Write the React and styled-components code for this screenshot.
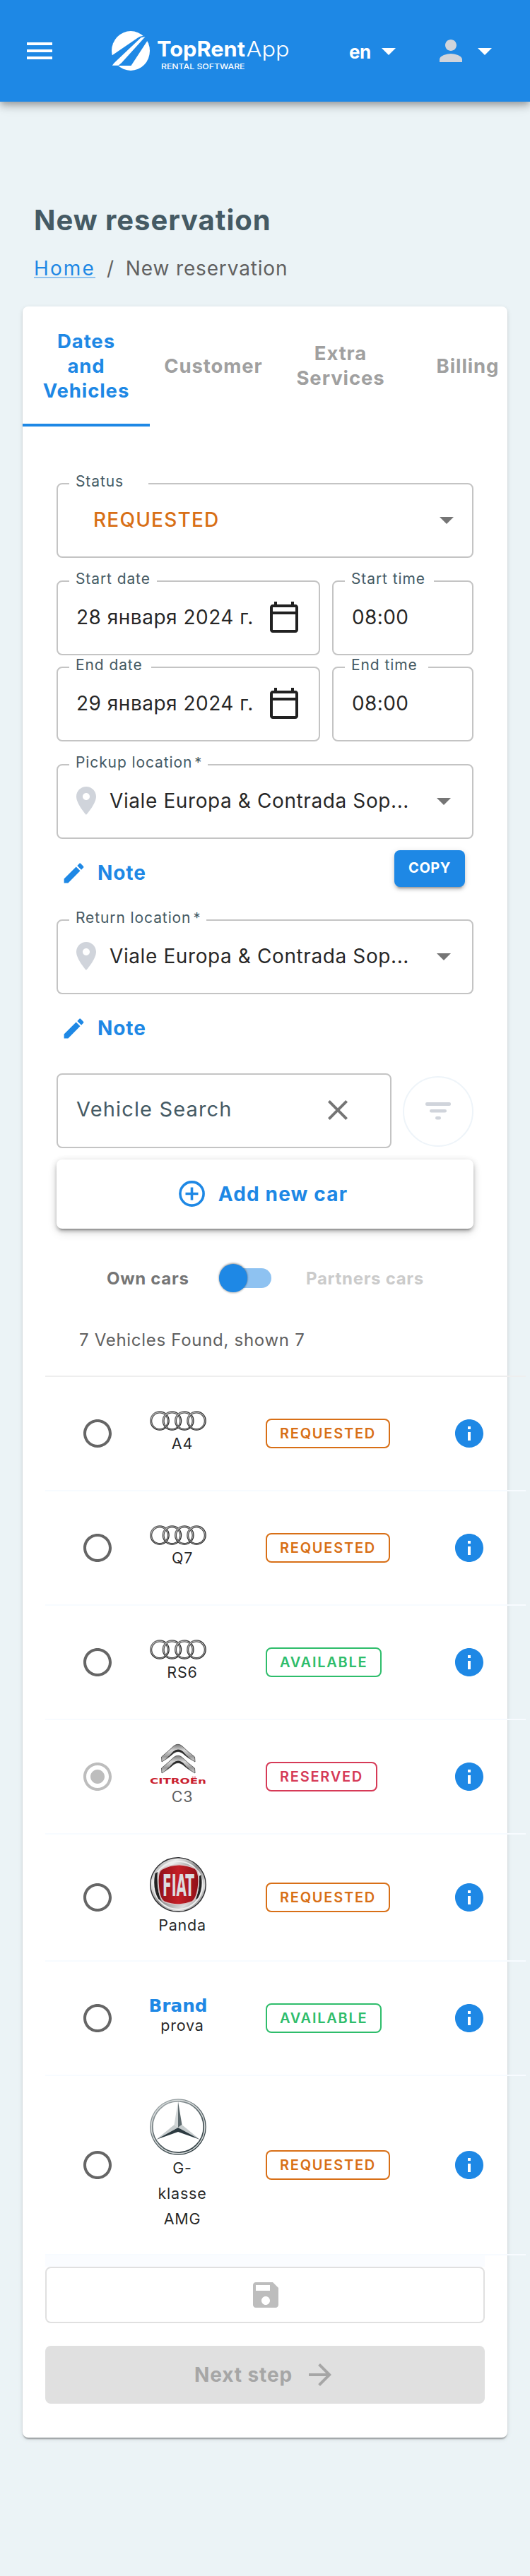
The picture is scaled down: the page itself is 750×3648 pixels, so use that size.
import React from "react";
import styled, { createGlobalStyle } from "styled-components";

const color = {
  primary: "#1e88e5",
  page: "#ebf3f6",
  heading: "#455a64",
  text: "rgba(0, 0, 0, 0.87)",
  muted: "#616161",
  outline: "#c4c4c4",
  icon: "#757575",
  pale: "#d0d4db",
  requested: "#d86f16",
  available: "#2ebd6b",
  reserved: "#d63a57",
};

const GlobalStyle = createGlobalStyle`
  *, *::before, *::after { box-sizing: border-box; }
  body {
    margin: 0;
    background: ${color.page};
    color: ${color.text};
    font-family: Inter, "Noto Sans", sans-serif;
    font-size: 28px;
  }
  svg { display: block; flex: none; overflow: visible; }
`;

/* ---------- icons ---------- */

const MaterialIcon = ({ d, size = 48, fill = "currentColor" }) => (
  <svg width={size} height={size} viewBox="0 0 24 24" fill={fill}>
    <path d={d} />
  </svg>
);

const paths = {
  menu: "M3 18h18v-2H3v2zm0-5h18v-2H3v2zm0-7v2h18V6H3z",
  caret: "M7 10l5 5 5-5z",
  person: "M12 12c2.21 0 4-1.79 4-4s-1.79-4-4-4-4 1.79-4 4 1.79 4 4 4zm0 2c-2.67 0-8 1.34-8 4v2h16v-2c0-2.66-5.33-4-8-4z",
  calendar: "M20 3h-1V1h-2v2H7V1H5v2H4c-1.1 0-2 .9-2 2v16c0 1.1.9 2 2 2h16c1.1 0 2-.9 2-2V5c0-1.1-.9-2-2-2zm0 18H4V10h16v11zm0-13H4V5h16v3z",
  pin: "M12 2C8.13 2 5 5.13 5 9c0 5.25 7 13 7 13s7-7.75 7-13c0-3.87-3.13-7-7-7zm0 9.5c-1.38 0-2.5-1.12-2.5-2.5s1.12-2.5 2.5-2.5 2.5 1.12 2.5 2.5-1.12 2.5-2.5 2.5z",
  edit: "M3 17.25V21h3.75L17.81 9.94l-3.75-3.75L3 17.25zM20.71 7.04c.39-.39.39-1.02 0-1.41l-2.34-2.34c-.39-.39-1.02-.39-1.41 0l-1.83 1.83 3.75 3.75 1.83-1.83z",
  close: "M19 6.41L17.59 5 12 10.59 6.41 5 5 6.41 10.59 12 5 17.59 6.41 19 12 13.41 17.59 19 19 17.59 13.41 12z",
  info: "M12 2C6.48 2 2 6.48 2 12s4.48 10 10 10 10-4.48 10-10S17.52 2 12 2zm1 15h-2v-6h2v6zm0-8h-2V7h2v2z",
  radioOff: "M12 2C6.48 2 2 6.48 2 12s4.48 10 10 10 10-4.48 10-10S17.52 2 12 2zm0 18c-4.42 0-8-3.58-8-8s3.58-8 8-8 8 3.58 8 8-3.58 8-8 8z",
  radioOn: "M12 7c-2.76 0-5 2.24-5 5s2.24 5 5 5 5-2.24 5-5-2.24-5-5-5zm0-5C6.48 2 2 6.48 2 12s4.48 10 10 10 10-4.48 10-10S17.52 2 12 2zm0 18c-4.42 0-8-3.58-8-8s3.58-8 8-8 8 3.58 8 8-3.58 8-8 8z",
  save: "M17 3H5c-1.11 0-2 .9-2 2v14c0 1.1.89 2 2 2h14c1.1 0 2-.9 2-2V7l-4-4zm-5 16c-1.66 0-3-1.34-3-3s1.34-3 3-3 3 1.34 3 3-1.34 3-3 3zm3-10H5V5h10v4z",
  arrow: "M12 4l-1.41 1.41L16.17 11H4v2h12.17l-5.58 5.59L12 20l8-8z",
};

const FilterIcon = () => (
  <svg width="36" height="26" viewBox="0 0 36 26" fill={color.pale}>
    <rect x="0" y="0" width="36" height="5" rx="2.2" />
    <rect x="6" y="10" width="24" height="4.4" rx="2.2" />
    <rect x="14" y="20" width="8" height="4.4" rx="2.2" />
  </svg>
);

const PlusCircleIcon = () => (
  <svg width="37" height="37" viewBox="0 0 37 37" fill="none" stroke={color.primary} strokeWidth="3.6">
    <circle cx="18.5" cy="18.5" r="16.6" />
    <path d="M18.5 9.5v18M9.5 18.5h18" />
  </svg>
);

/* ---------- brand logos ---------- */

const AppLogo = () => (
  <svg width="252" height="56" viewBox="0 0 252 56" fill="#fff">
    <ellipse cx="27" cy="28" rx="27" ry="28" />
    <path d="M-1 35.5 37 9.5q2.500-2.500 7-2.500h5.500l1.500 6L27.500 49H-1z" fill={color.primary} />
    <path d="M41.500 9.200 47.500 8 14 45l-4.500 3.800H.8q1.500-2.500 4.200-5z" />
    <g fontFamily="Inter, sans-serif">
      <text x="64" y="36.300" fontSize="29.500" fontWeight="700" textLength="125" lengthAdjust="spacingAndGlyphs">TopRent</text>
      <text x="190.500" y="36.300" fontSize="29.500" fontWeight="300" textLength="61" lengthAdjust="spacingAndGlyphs">App</text>
      <text x="70" y="53.700" fontSize="11" fontWeight="500" textLength="118.500" lengthAdjust="spacingAndGlyphs">RENTAL SOFTWARE</text>
    </g>
  </svg>
);

const AudiLogo = () => (
  <svg width="80" height="28" viewBox="0 0 80 28" fill="none">
    <defs>
      <linearGradient id="audiRing" x1="0" y1="0" x2="1" y2="1">
        <stop offset="0" stopColor="#888" />
        <stop offset="0.4" stopColor="#333" />
        <stop offset="1" stopColor="#222" />
      </linearGradient>
    </defs>
    {[14, 31.4, 48.8, 66].map((cx) => (
      <g key={cx}>
        <circle cx={cx} cy="14" r="12.300" stroke="#c4c4c4" strokeWidth="2.400" />
        <circle cx={cx} cy="14" r="13.200" stroke="url(#audiRing)" strokeWidth="1.200" />
        <circle cx={cx} cy="14.300" r="11.300" stroke="#4a4a4a" strokeWidth="1.100" />
      </g>
    ))}
  </svg>
);

const CitroenLogo = () => (
  <svg width="80" height="56" viewBox="0 0 80 56">
    <defs>
      <linearGradient id="chevron" x1="0" y1="0" x2="0" y2="1">
        <stop offset="0" stopColor="#777" />
        <stop offset="0.35" stopColor="#d8d8d8" />
        <stop offset="0.7" stopColor="#999" />
        <stop offset="1" stopColor="#ddd" />
      </linearGradient>
    </defs>
    {[0, 16].map((y) => (
      <g key={y} transform={`translate(0 ${y})`}>
        <path
          d="M16.500 18Q25 11 34 2.500 40-2 45.500 2.500 54 11 63.500 18L64 25Q54 20 46 12.500 40 8.500 34 12.500 26 20 17 25z"
          fill="url(#chevron)"
          stroke="#555"
          strokeWidth="0.900"
        />
        <path d="M22 21Q28 17 33 10.500 40 4.500 47 10.500 52 17 58 21 51 17.500 46 12.500 40 8.500 34 12.500 29 17.500 22 21z" fill="#2b2b2b" />
      </g>
    ))}
    <text x="0" y="55.700" fontFamily="DejaVu Sans, sans-serif" fontSize="10" fontWeight="700" fill="#c9202f" textLength="80" lengthAdjust="spacingAndGlyphs">
      CITROËn
    </text>
  </svg>
);

const FiatLogo = () => (
  <svg width="80" height="78" viewBox="0 0 80 78">
    <defs>
      <linearGradient id="fiatChrome" x1="0" y1="0" x2="1" y2="1">
        <stop offset="0" stopColor="#777" />
        <stop offset="0.25" stopColor="#eee" />
        <stop offset="0.5" stopColor="#888" />
        <stop offset="0.75" stopColor="#ddd" />
        <stop offset="1" stopColor="#444" />
      </linearGradient>
      <linearGradient id="fiatRed" x1="0" y1="0" x2="1" y2="0">
        <stop offset="0" stopColor="#8f1018" />
        <stop offset="0.5" stopColor="#c41f27" />
        <stop offset="1" stopColor="#8f1018" />
      </linearGradient>
    </defs>
    <ellipse cx="40" cy="39" rx="39.200" ry="38.200" fill="url(#fiatChrome)" stroke="#2d2d30" strokeWidth="1.400" />
    <ellipse cx="40" cy="40" rx="34.500" ry="34" fill="none" stroke="#efefef" strokeWidth="2" />
    <path d="M7.500 23Q3.500 44 12 59L16 62Q9 43 11 21zM72.500 25Q76 44 68 58L65 60Q71 43 70 27z" fill="#222" />
    <path
      d="M17 17Q40 5 64 16 70 20 69 38 67 58 60 63 40 71 20 63 13 58 12 38 11 20 17 17z"
      fill="url(#fiatRed)"
      stroke="#d9c5c7"
      strokeWidth="1.600"
    />
    <text x="18" y="54.500" fontFamily="DejaVu Sans Condensed, DejaVu Sans, sans-serif" fontSize="43" fontWeight="700" fill="#dcdde0" textLength="45" lengthAdjust="spacingAndGlyphs">
      FIAT
    </text>
  </svg>
);

const MercedesLogo = () => (
  <svg width="80" height="80" viewBox="0 0 80 80">
    <defs>
      <linearGradient id="mbRing" x1="0.2" y1="0" x2="0.8" y2="1">
        <stop offset="0" stopColor="#a2aaac" />
        <stop offset="0.5" stopColor="#566266" />
        <stop offset="1" stopColor="#2c3a3e" />
      </linearGradient>
    </defs>
    <circle cx="40" cy="40" r="37.600" fill="none" stroke="url(#mbRing)" strokeWidth="4.400" />
    <circle cx="40" cy="40" r="37.800" fill="none" stroke="#d9dddd" strokeWidth="1.500" />
    <path d="M40 4 34.500 37 40 41z" fill="#d0d5d6" />
    <path d="M40 4 45.500 37 40 41z" fill="#5e6a6e" />
    <path d="M45.500 37 71 58 40 41z" fill="#c6cccd" />
    <path d="M34.500 37 9 58 40 41z" fill="#c6cccd" />
    <path d="M40 41 71 58 40 47 9 58z" fill="#2c3a40" />
  </svg>
);

const BrandPlaceholder = () => (
  <svg width="82" height="20" viewBox="0 0 82 20">
    <text x="-1.500" y="19" fontFamily="DejaVu Sans, sans-serif" fontSize="24.500" fontWeight="700" fill={color.primary} textLength="83" lengthAdjust="spacingAndGlyphs">
      Brand
    </text>
  </svg>
);

/* ---------- header ---------- */

const Header = styled.header`
  position: relative;
  display: flex;
  align-items: center;
  height: 144px;
  padding: 0 40px 0 32px;
  background: ${color.primary};
  color: #fff;
  box-shadow: 0 4px 8px -2px rgba(0, 0, 0, 0.2), 0 8px 10px rgba(0, 0, 0, 0.14), 0 2px 20px rgba(0, 0, 0, 0.12);
`;

const LogoLink = styled.div`
  margin-left: 78px;
`;

const LanguageMenu = styled.div`
  display: flex;
  align-items: center;
  margin-left: 84px;
  font-size: 26px;
  font-weight: 700;
  letter-spacing: -0.5px;
  span { width: 32px; padding-top: 3px; }
`;

const AccountMenu = styled.div`
  display: flex;
  align-items: center;
  margin-left: auto;
  svg:first-child { color: ${color.pale}; }
`;

/* ---------- page heading ---------- */

const Heading = styled.div`
  padding: 144px 48px 37px;
`;

const Title = styled.h1`
  margin: 0;
  color: ${color.heading};
  font-size: 40px;
  font-weight: 700;
  line-height: 48px;
  letter-spacing: 0.95px;
`;

const Breadcrumbs = styled.nav`
  display: flex;
  margin-top: 27px;
  color: ${color.muted};
  line-height: 34px;
  letter-spacing: 0.85px;
  a {
    height: 31px;
    color: ${color.primary};
    border-bottom: 2px solid rgba(30, 136, 229, 0.45);
    letter-spacing: 2.1px;
  }
  i {
    width: 43px;
    text-align: center;
    font-style: normal;
  }
`;

/* ---------- card and tabs ---------- */

const Card = styled.section`
  width: 686px;
  margin: 0 0 196px 32px;
  padding-bottom: 48px;
  border-radius: 8px;
  background: #fff;
  box-shadow: 0 4px 2px -2px rgba(0, 0, 0, 0.2), 0 2px 2px rgba(0, 0, 0, 0.14), 0 2px 6px rgba(0, 0, 0, 0.12);
`;

const Tabs = styled.div`
  display: flex;
  height: 170px;
  overflow: hidden;
`;

const Tab = styled.div`
  display: flex;
  flex: 0 0 180px;
  align-items: center;
  justify-content: center;
  padding: 2px ${(p) => (p.$narrow ? 26 : 12)}px 0;
  border-bottom: 4px solid ${(p) => (p.$active ? color.primary : "transparent")};
  color: ${(p) => (p.$active ? color.primary : "#a0a0a0")};
  font-size: 27.5px;
  font-weight: 700;
  line-height: 35px;
  letter-spacing: 0.9px;
  text-align: center;
`;

/* ---------- form ---------- */

const Form = styled.div`
  padding: 80px 48px 0;
`;

const Field = styled.div`
  position: relative;
  display: flex;
  align-items: center;
  height: 106px;
  padding: 0 ${(p) => p.$right ?? 26}px 2px ${(p) => p.$left ?? 26}px;
  border: 2px solid ${color.outline};
  border-radius: 8px;
`;

const FieldLabel = styled.label`
  position: absolute;
  top: -14px;
  left: 16px;
  width: ${(p) => p.$notch}px;
  padding-left: 9px;
  background: #fff;
  color: ${color.heading};
  font-size: 21px;
  line-height: 20px;
  letter-spacing: 0.9px;
  white-space: nowrap;
  sup {
    margin-left: 3px;
    font-size: 20px;
    line-height: 0;
    vertical-align: baseline;
    letter-spacing: 0;
  }
`;

const Value = styled.span`
  flex: 1;
  letter-spacing: ${(p) => p.$spacing ?? 1}px;
  white-space: nowrap;
`;

const StatusValue = styled(Value)`
  color: ${color.requested};
  font-weight: 500;
`;

const CaretSlot = styled.span`
  color: ${color.icon};
`;

const DateRow = styled.div`
  display: grid;
  grid-template-columns: 373px 200px;
  gap: 17px;
  margin-top: ${(p) => p.$top}px;
`;

const LocationField = styled(Field)`
  margin-top: ${(p) => p.$top ?? 0}px;
`;

const PinSlot = styled.span`
  margin-right: 9px;
  color: ${color.pale};
`;

const NoteRow = styled.div`
  display: flex;
  justify-content: space-between;
  height: ${(p) => p.$height}px;
  padding: 16px 12px 0 6px;
`;

const NoteButton = styled.div`
  display: flex;
  align-items: center;
  gap: 15px;
  height: 64px;
  color: ${color.primary};
  font-weight: 700;
  letter-spacing: 0.9px;
`;

const CopyButton = styled.div`
  width: 100px;
  height: 52px;
  border-radius: 8px;
  background: ${color.primary};
  color: #fff;
  font-size: 20px;
  font-weight: 700;
  line-height: 50px;
  letter-spacing: 0.5px;
  text-align: center;
  box-shadow: 0 6px 2px -4px rgba(0, 0, 0, 0.2), 0 4px 4px rgba(0, 0, 0, 0.14), 0 2px 10px rgba(0, 0, 0, 0.12);
`;

const SearchRow = styled.div`
  display: grid;
  grid-template-columns: 474px 100px;
  justify-content: space-between;
  align-items: center;
`;

const SearchText = styled(Value)`
  padding-bottom: 4px;
  color: ${color.heading};
  font-size: 29px;
`;

const FilterButton = styled.div`
  display: grid;
  place-items: center;
  width: 100px;
  height: 100px;
  margin-top: 2px;
  border: 2px solid #eef4f9;
  border-radius: 50%;
`;

const AddCarButton = styled.div`
  display: flex;
  align-items: center;
  justify-content: center;
  gap: 19px;
  height: 98px;
  margin-top: 16px;
  padding: 0 5px 1px 0;
  border-radius: 8px;
  background: #fff;
  color: ${color.primary};
  font-weight: 700;
  letter-spacing: 1.15px;
  box-shadow: 0 6px 2px -4px rgba(0, 0, 0, 0.2), 0 4px 4px rgba(0, 0, 0, 0.14), 0 2px 10px rgba(0, 0, 0, 0.16), 0 6px 14px rgba(0, 0, 0, 0.1);
`;

const OwnershipRow = styled.div`
  display: flex;
  align-items: center;
  height: 140px;
  padding-left: 71px;
  font-size: 24px;
  font-weight: 700;
`;

const OwnershipLabel = styled.span`
  width: ${(p) => p.$width}px;
  color: ${(p) => (p.$active ? "#757575" : "#cbcbcb")};
  letter-spacing: 0.7px;
  white-space: nowrap;
`;

const Switch = styled.div`
  display: flex;
  align-items: center;
  width: 68px;
  height: 28px;
  margin: 0 49px 0 6px;
  border-radius: 14px;
  background: #8ec2f1;
  &::before {
    content: "";
    flex: none;
    width: 40px;
    height: 40px;
    margin-left: -6px;
    border-radius: 50%;
    background: ${color.primary};
    box-shadow: 0 2px 2px rgba(0, 0, 0, 0.14), 0 -1px 3px rgba(0, 0, 0, 0.45);
  }
`;

const ResultCount = styled.div`
  height: 68px;
  padding-left: 32px;
  color: ${color.muted};
  font-size: 24px;
  line-height: 35px;
  letter-spacing: 0.7px;
`;

/* ---------- vehicle table ---------- */

const VehicleList = styled.div`
  width: 680px;
  margin-left: 32px;
  border-top: 2px solid #eeeeee;
`;

const VehicleRow = styled.div`
  display: grid;
  grid-template-columns: 148px 92px 72px 264px 1fr;
  align-items: center;
  min-height: 162px;
  padding: 32px 0;
  border-bottom: 2px solid #f7fbff;
`;

const RadioCell = styled.div`
  grid-column: 1;
  padding-left: 50px;
  color: ${(p) => (p.$disabled ? "#bdbdbd" : "#666")};
`;

const ModelCell = styled.div`
  grid-column: 2;
  color: ${(p) => (p.$disabled ? "#616161" : color.text)};
`;

const ModelName = styled.div`
  width: 70px;
  margin-left: 11px;
  font-size: 21.5px;
  line-height: 36px;
  letter-spacing: 0.8px;
  text-align: center;
`;

const StatusCell = styled.div`
  grid-column: 4;
`;

const InfoCell = styled.div`
  grid-column: 5;
  color: ${color.primary};
`;

const StatusChip = styled.div`
  display: block;
  width: ${(p) => p.$width}px;
  height: 42px;
  padding-left: 18px;
  border: 2px solid ${(p) => color[p.$status]};
  border-radius: 8px;
  color: ${(p) => color[p.$status]};
  font-size: 20px;
  font-weight: 600;
  line-height: 38px;
  letter-spacing: 1.75px;
  text-transform: uppercase;
`;

/* ---------- footer actions ---------- */

const Actions = styled.div`
  display: grid;
  gap: 32px;
  margin: 0 32px;
  padding-top: 16px;
  background: linear-gradient(#fafcff 16px, transparent 16px);
`;

const SaveButton = styled.div`
  display: grid;
  place-items: center;
  height: 80px;
  padding-left: 2px;
  border: 2px solid #e0e0e0;
  border-radius: 8px;
  background: #fff;
  color: #bdbdbd;
`;

const NextButton = styled.div`
  display: flex;
  align-items: center;
  justify-content: center;
  gap: 15px;
  height: 82px;
  padding-left: 2px;
  border-radius: 8px;
  background: #e0e0e0;
  color: #a6a6a6;
  font-weight: 700;
  letter-spacing: 0.9px;
`;

const chipWidths = { requested: 176, available: 164, reserved: 158 };

const vehicles = [
  { name: "A4", Logo: AudiLogo, status: "requested" },
  { name: "Q7", Logo: AudiLogo, status: "requested" },
  { name: "RS6", Logo: AudiLogo, status: "available" },
  { name: "C3", Logo: CitroenLogo, status: "reserved", disabled: true },
  { name: "Panda", Logo: FiatLogo, status: "requested" },
  { name: "prova", Logo: BrandPlaceholder, status: "available" },
  { name: "G-klasse AMG", Logo: MercedesLogo, status: "requested" },
];

const Location = ({ label, notch, top }) => (
  <LocationField $left={16} $right={16} $top={top}>
    <FieldLabel $notch={notch}>
      {label}
      <sup>*</sup>
    </FieldLabel>
    <PinSlot><MaterialIcon d={paths.pin} /></PinSlot>
    <Value $spacing={0.6}>Viale Europa &amp; Contrada Sop...</Value>
    <CaretSlot><MaterialIcon d={paths.caret} /></CaretSlot>
  </LocationField>
);

const DateTime = ({ prefix, date, notches, top }) => (
  <DateRow $top={top}>
    <Field $right={25}>
      <FieldLabel $notch={notches[0]}>{prefix} date</FieldLabel>
      <Value $spacing={0.5}>{date}</Value>
      <MaterialIcon d={paths.calendar} fill="rgba(0,0,0,0.87)" />
    </Field>
    <Field>
      <FieldLabel $notch={notches[1]}>{prefix} time</FieldLabel>
      <Value $spacing={0.4}>08:00</Value>
    </Field>
  </DateRow>
);

export default function App() {
  return (
    <>
      <GlobalStyle />
      <Header>
        <MaterialIcon d={paths.menu} />
        <LogoLink><AppLogo /></LogoLink>
        <LanguageMenu>
          <span>en</span>
          <MaterialIcon d={paths.caret} />
        </LanguageMenu>
        <AccountMenu>
          <MaterialIcon d={paths.person} />
          <MaterialIcon d={paths.caret} />
        </AccountMenu>
      </Header>

      <Heading>
        <Title>New reservation</Title>
        <Breadcrumbs>
          <a>Home</a>
          <i>/</i>
          <span>New reservation</span>
        </Breadcrumbs>
      </Heading>

      <Card>
        <Tabs>
          <Tab $active $narrow>Dates and Vehicles</Tab>
          <Tab>Customer</Tab>
          <Tab $narrow>Extra Services</Tab>
          <Tab>Billing</Tab>
        </Tabs>

        <Form>
          <Field $left={50} $right={12}>
            <FieldLabel $notch={112}>Status</FieldLabel>
            <StatusValue $spacing={1.2}>REQUESTED</StatusValue>
            <CaretSlot><MaterialIcon d={paths.caret} /></CaretSlot>
          </Field>

          <DateTime prefix="Start" date="28 января 2024 г." notches={[124, 126]} top={32} />
          <DateTime prefix="End" date="29 января 2024 г." notches={[116, 118]} top={16} />

          <Location label="Pickup location" notch={196} top={32} />
          <NoteRow $height={114}>
            <NoteButton>
              <MaterialIcon d={paths.edit} size={37} />
              Note
            </NoteButton>
            <CopyButton>COPY</CopyButton>
          </NoteRow>

          <Location label="Return location" notch={194} />
          <NoteRow $height={112}>
            <NoteButton>
              <MaterialIcon d={paths.edit} size={37} />
              Note
            </NoteButton>
          </NoteRow>

          <SearchRow>
            <Field $right={50}>
              <SearchText $spacing={1.15}>Vehicle Search</SearchText>
              <MaterialIcon d={paths.close} fill={color.icon} />
            </Field>
            <FilterButton><FilterIcon /></FilterButton>
          </SearchRow>

          <AddCarButton>
            <PlusCircleIcon />
            Add new car
          </AddCarButton>

          <OwnershipRow>
            <OwnershipLabel $active $width={159}>Own cars</OwnershipLabel>
            <Switch />
            <OwnershipLabel $width={170}>Partners cars</OwnershipLabel>
          </OwnershipRow>

          <ResultCount>7 Vehicles Found, shown 7</ResultCount>
        </Form>

        <VehicleList>
          {vehicles.map(({ name, Logo, status, disabled }) => (
            <VehicleRow key={name}>
              <RadioCell $disabled={disabled}>
                <MaterialIcon d={disabled ? paths.radioOn : paths.radioOff} />
              </RadioCell>
              <ModelCell $disabled={disabled}>
                <Logo />
                <ModelName>{name}</ModelName>
              </ModelCell>
              <StatusCell>
                <StatusChip $status={status} $width={chipWidths[status]}>{status}</StatusChip>
              </StatusCell>
              <InfoCell><MaterialIcon d={paths.info} /></InfoCell>
            </VehicleRow>
          ))}
        </VehicleList>

        <Actions>
          <SaveButton><MaterialIcon d={paths.save} /></SaveButton>
          <NextButton>
            Next step
            <MaterialIcon d={paths.arrow} />
          </NextButton>
        </Actions>
      </Card>
    </>
  );
}
